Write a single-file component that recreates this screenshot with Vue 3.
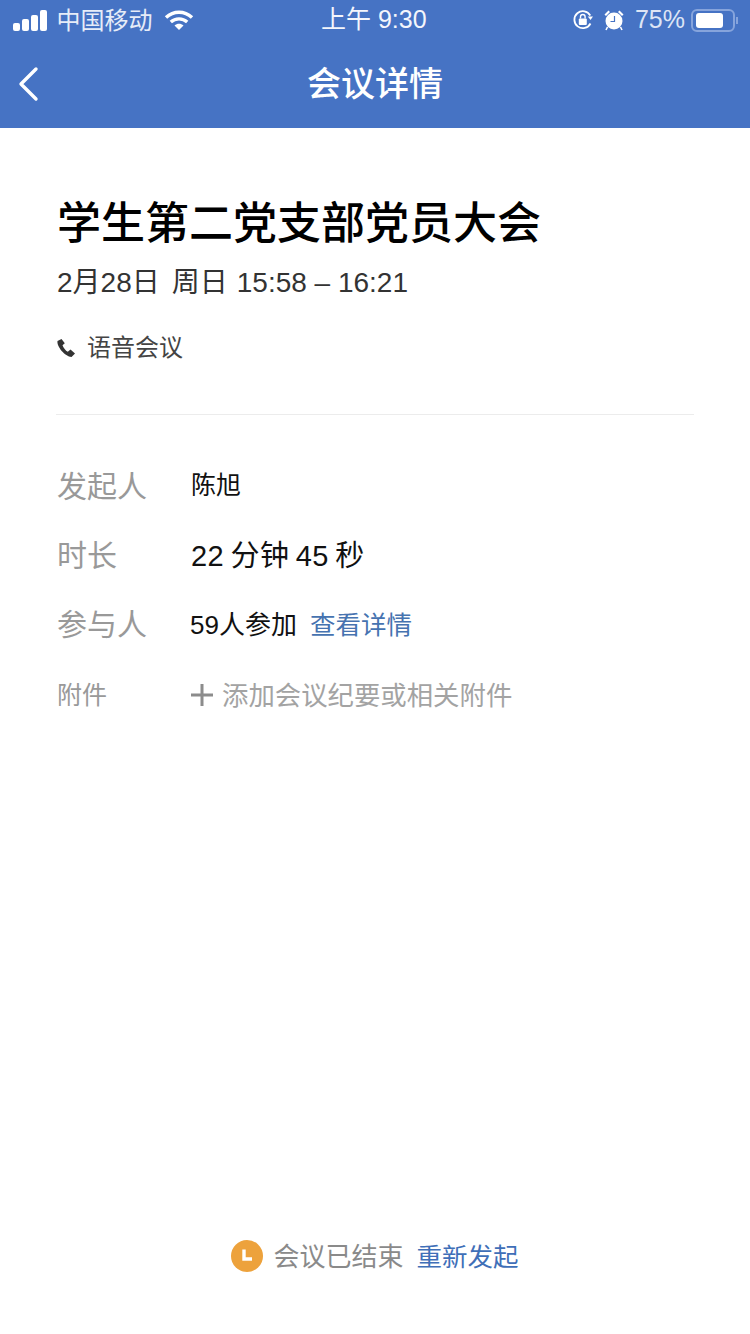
<template>
  <div class="page">
    <header class="top">
      <div class="status">
        <div class="status-left">
          <div class="signal">
            <i class="b1"></i><i class="b2"></i><i class="b3"></i><i class="b4"></i>
          </div>
          <span class="carrier">中国移动</span>
          <svg class="wifi" width="30" height="22" viewBox="0 0 30 22">
            <path d="M2 8.500C9.500 1.500 20.500 1.500 28 8.500" fill="none" stroke="#fff" stroke-width="3.400" />
            <path d="M6.800 13C11.500 8.800 18.500 8.800 23.200 13" fill="none" stroke="#fff" stroke-width="3.400" />
            <path d="M10.500 16.500C13.200 14.300 16.800 14.300 19.500 16.500L15 21Z" fill="#fff" />
          </svg>
        </div>
        <span class="clock">上午 9:30</span>
        <div class="status-right">
          <svg class="lock" width="22" height="22" viewBox="0 0 22 22">
            <path d="M18.500 14.500A8.500 8.500 0 1 1 18.300 6.500" fill="none" stroke="#fff" stroke-width="1.800" />
            <path d="M15.800 7.500H21L18.500 11Z" fill="#fff" />
            <rect x="6.800" y="9.500" width="8" height="6.500" rx="1" fill="#fff" />
            <path d="M8.500 9.500V7.800a2.300 2.300 0 0 1 4.600 0V9.500" fill="none" stroke="#fff" stroke-width="1.400" />
          </svg>
          <svg class="alarm" width="22" height="22" viewBox="0 0 22 22">
            <circle cx="11" cy="12" r="8.500" fill="#fff" />
            <path d="M1.500 5.500L5.500 1.500L7 3L3 7Z M20.500 5.500L16.500 1.500L15 3L19 7Z" fill="#fff" />
            <path d="M4.500 18L3 21M17.500 18L19 21" stroke="#fff" stroke-width="1.600" />
            <path d="M11.500 7V12.500H7.500" fill="none" stroke="#4673c4" stroke-width="1.200" />
          </svg>
          <span class="percent">75%</span>
          <div class="battery"><div class="level" :style="{ width: batteryLevel + 'px' }"></div></div>
          <div class="battery-tip"></div>
        </div>
      </div>
      <div class="nav">
        <svg class="back" width="24" height="36" viewBox="0 0 24 36">
          <path d="M20 3L5 18L20 33" fill="none" stroke="#fff" stroke-width="3.400" stroke-linecap="round" stroke-linejoin="round" />
        </svg>
        <h1 class="nav-title">会议详情</h1>
      </div>
    </header>

    <section class="summary">
      <h2 class="title">学生第二党支部党员大会</h2>
      <p class="date">
        <span class="day">2月28日</span>
        <span class="weekday">周日</span>
        <span>15:58 – 16:21</span>
      </p>
      <div class="kind">
        <svg width="20" height="20" viewBox="0 0 20 20">
          <path d="M5.500 1L1.500 3C0.500 8.500 9 18.500 15.500 19L19 15.500L14.500 11.500L11.800 13.800C9.500 12.500 7.500 10 6.500 7.200L8.800 5.200Z" fill="#333" />
        </svg>
        <span>语音会议</span>
      </div>
    </section>

    <section class="details">
      <div class="row row-starter">
        <span class="label">发起人</span>
        <span class="value">陈旭</span>
      </div>
      <div class="row row-duration">
        <span class="label">时长</span>
        <span class="value">22 分钟 45 秒</span>
      </div>
      <div class="row row-people">
        <span class="label">参与人</span>
        <span class="value">59人参加</span>
        <a class="link">查看详情</a>
      </div>
      <div class="row row-files">
        <span class="label">附件</span>
        <svg class="plus" width="24" height="24" viewBox="0 0 24 24">
          <path d="M12 1V23M1 12H23" stroke="#8c8c8c" stroke-width="3" />
        </svg>
        <span class="add">添加会议纪要或相关附件</span>
      </div>
    </section>

    <footer class="foot">
      <svg class="foot-icon" width="32" height="32" viewBox="0 0 32 32">
        <circle cx="16" cy="16" r="16" fill="#eda23c" />
        <path d="M13 9.500V19H21" fill="none" stroke="#fff" stroke-width="3.400" />
      </svg>
      <span class="ended">会议已结束</span>
      <a class="link again">重新发起</a>
    </footer>
  </div>
</template>

<script setup>
const batteryLevel = 27
</script>

<style>
body {
  background: #fff;
}
</style>

<style scoped>
.page {
  display: flex;
  flex-direction: column;
  width: 750px;
  height: 1334px;
  background: #fff;
  font-family: "Liberation Sans", "Noto Sans CJK SC", sans-serif;
  overflow: hidden;
}

.top {
  height: 128px;
  background: #4673c4;
  color: #fff;
}

.status {
  display: flex;
  align-items: center;
  justify-content: space-between;
  position: relative;
  height: 40px;
  padding: 0 12px 0 13px;
}

.status-left,
.status-right {
  display: flex;
  align-items: center;
}

.signal {
  display: flex;
  align-items: flex-end;
  gap: 2.500px;
  height: 21px;
  margin-right: 10px;
}

.signal i {
  width: 6.500px;
  border-radius: 2px;
  background: #fff;
}

.b1 { height: 8px; }
.b2 { height: 12px; }
.b3 { height: 16px; }
.b4 { height: 21px; }

.carrier {
  margin-top: -4px;
  font-size: 24px;
  color: #e6ecf8;
}

.wifi {
  margin-left: 11px;
  margin-top: -1px;
}

.clock {
  position: absolute;
  left: 321px;
  top: 1px;
  font-size: 25px;
  line-height: 36px;
  color: #f4f6fc;
}

.lock {
  margin-right: 9px;
  margin-left: 0;
}

.percent {
  margin-left: 10px;
  margin-top: -2px;
  font-size: 25px;
  color: #dde5f5;
}

.battery {
  display: flex;
  align-items: center;
  width: 44px;
  height: 23px;
  margin-left: 6px;
  padding: 2px 3px;
  box-sizing: border-box;
  border: 2px solid #86a4dc;
  border-radius: 6px;
}

.level {
  height: 15px;
  border-radius: 3px;
  background: #fff;
}

.battery-tip {
  width: 2px;
  height: 7px;
  margin-left: 1px;
  background: #86a4dc;
}

.nav {
  display: flex;
  align-items: center;
  justify-content: center;
  position: relative;
  height: 88px;
}

.back {
  position: absolute;
  left: 16px;
  top: 26px;
}

.nav-title {
  margin: 0;
  font-size: 34px;
  font-weight: 500;
  line-height: 88px;
}

.summary {
  margin: 0 56px;
  padding: 64px 0 49px 1px;
  border-bottom: 1px solid #ececec;
}

.title {
  margin: 0;
  font-size: 44px;
  font-weight: 500;
  line-height: 64px;
  color: #000;
}

.date {
  display: flex;
  margin: 7px 0 0;
  font-size: 28px;
  line-height: 40px;
  color: #333;
}

.day {
  margin-right: 12px;
}

.weekday {
  margin-right: 9px;
}

.kind {
  display: flex;
  align-items: center;
  gap: 11px;
  margin-top: 28px;
  margin-left: -1px;
  font-size: 24px;
  line-height: 34px;
  color: #444;
}

.details {
  display: flex;
  flex-direction: column;
  padding: 44px 57px 0;
}

.row {
  display: flex;
  align-items: center;
  height: 50px;
  margin-bottom: 19px;
}

.label {
  flex: 0 0 134px;
  font-size: 30px;
  color: #999;
}

.value {
  color: #111;
}

.row-starter .value {
  font-size: 25px;
  transform: translateY(-1px);
}

.row-duration .value {
  font-size: 29px;
  letter-spacing: 0.400px;
  word-spacing: -2px;
}

.row-people .value {
  margin-left: -1px;
  font-size: 26px;
}

.link {
  color: #4673b0;
}

.row-people .link {
  margin-left: 13px;
  font-size: 25.500px;
}

.row-files {
  margin-top: 2px;
}

.row-files .label {
  font-size: 25px;
}

.plus {
  margin-left: -1px;
  margin-right: 8px;
  transform: translateY(2px);
}

.add {
  font-size: 26.400px;
  color: #a3a3a3;
}

.foot {
  display: flex;
  align-items: center;
  justify-content: center;
  gap: 10px;
  margin-top: auto;
  height: 40px;
  margin-bottom: 60px;
  font-size: 26px;
}

.foot-icon {
  margin-top: 4px;
}

.ended {
  color: #8a8a8a;
}

.again {
  margin-left: 3px;
  font-size: 25.500px;
  color: #3f6fb8;
}
</style>
